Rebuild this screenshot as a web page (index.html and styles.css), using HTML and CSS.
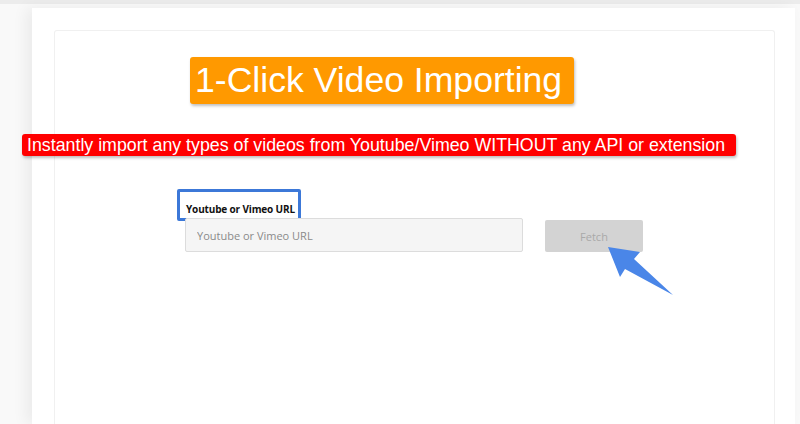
FILE: index.html
```html
<!DOCTYPE html>
<html>
<head>
<meta charset="utf-8">
<link rel="stylesheet" href="styles.css">
</head>
<body>
<div class="topbar"></div>
<div class="card">
  <div class="panel">
    <div class="title">1-Click Video Importing</div>
    <div class="subtitle">Instantly import any types of videos from Youtube/Vimeo WITHOUT any API or extension</div>
    <div class="form">
      <div class="field">
        <div class="label">Youtube or Vimeo URL</div>
        <input class="input" type="text" placeholder="Youtube or Vimeo URL">
      </div>
      <div class="btnwrap">
        <button class="fetch">Fetch</button>
        <svg class="arrow" width="80" height="60" viewBox="600 240 80 60">
          <polygon points="608,247 640,252 634,259 673,295 625,269 620,277" fill="#4a86e8"/>
        </svg>
      </div>
    </div>
  </div>
</div>
</body>
</html>
```
FILE: styles.css
```css
html, body { margin: 0; padding: 0; }
body {
  background: #f9f9f9;
  width: 800px;
  height: 424px;
  overflow: hidden;
  font-family: "Liberation Sans", Arial, sans-serif;
}
.topbar {
  height: 4px;
  background: #ececec;
}
.card {
  margin: 4px 5px 0 32px;
  background: #fff;
  height: 416px;
  padding: 22px 20px 0 22px;
  box-sizing: border-box;
  box-shadow: -6px 0 14px rgba(0,0,0,0.06);
}
.panel {
  border: 1px solid #f0f0f0;
  border-bottom: none;
  border-radius: 3px 3px 0 0;
  height: 394px;
  box-sizing: border-box;
}
.title {
  display: inline-block;
  margin: 26px 0 0 135px;
  background: #ff9900;
  color: #fff;
  font-size: 35.6px;
  line-height: 47px;
  padding: 0 12px 0 5px;
  border-radius: 3px;
  box-shadow: 1px 2px 3px rgba(0,0,0,0.25);
}
.subtitle {
  display: block;
  width: fit-content;
  margin: 30px 0 0 -33px;
  background: #ff0000;
  color: #fff;
  font-size: 17.8px;
  line-height: 22px;
  padding: 0 11px 0 5px;
  border-radius: 3px;
  box-shadow: 1px 2px 3px rgba(0,0,0,0.25);
}
.form {
  display: flex;
  margin: 33px 0 0 122px;
}
.field {
  display: flex;
  flex-direction: column;
}
.label {
  width: fit-content;
  border: 3px solid #3c78d8;
  border-radius: 2px;
  padding: 10px 3px 1px 6px;
  font-family: "Open Sans", sans-serif;
  font-weight: 700;
  font-size: 10px;
  letter-spacing: -0.15px;
  line-height: 15px;
  color: #111;
}
.input {
  margin: -3px 0 0 8px;
  width: 338px;
  height: 34px;
  box-sizing: border-box;
  background: #f5f5f5;
  border: 1px solid #dcdcdc;
  border-radius: 2px;
  padding: 0 11px;
  font-family: "Open Sans", sans-serif;
  font-size: 11px;
  outline: none;
}
.input::placeholder { color: #8a8a8a; }
.btnwrap {
  position: relative;
  margin: 31px 0 0 22px;
}
.fetch {
  width: 98px;
  height: 32px;
  background: #d3d3d3;
  border: none;
  border-radius: 2px;
  color: #a9a9a9;
  font-family: "Open Sans", sans-serif;
  font-size: 11px;
  padding: 0;
}
.arrow {
  position: absolute;
  left: 55px;
  top: 20px;
}
```
